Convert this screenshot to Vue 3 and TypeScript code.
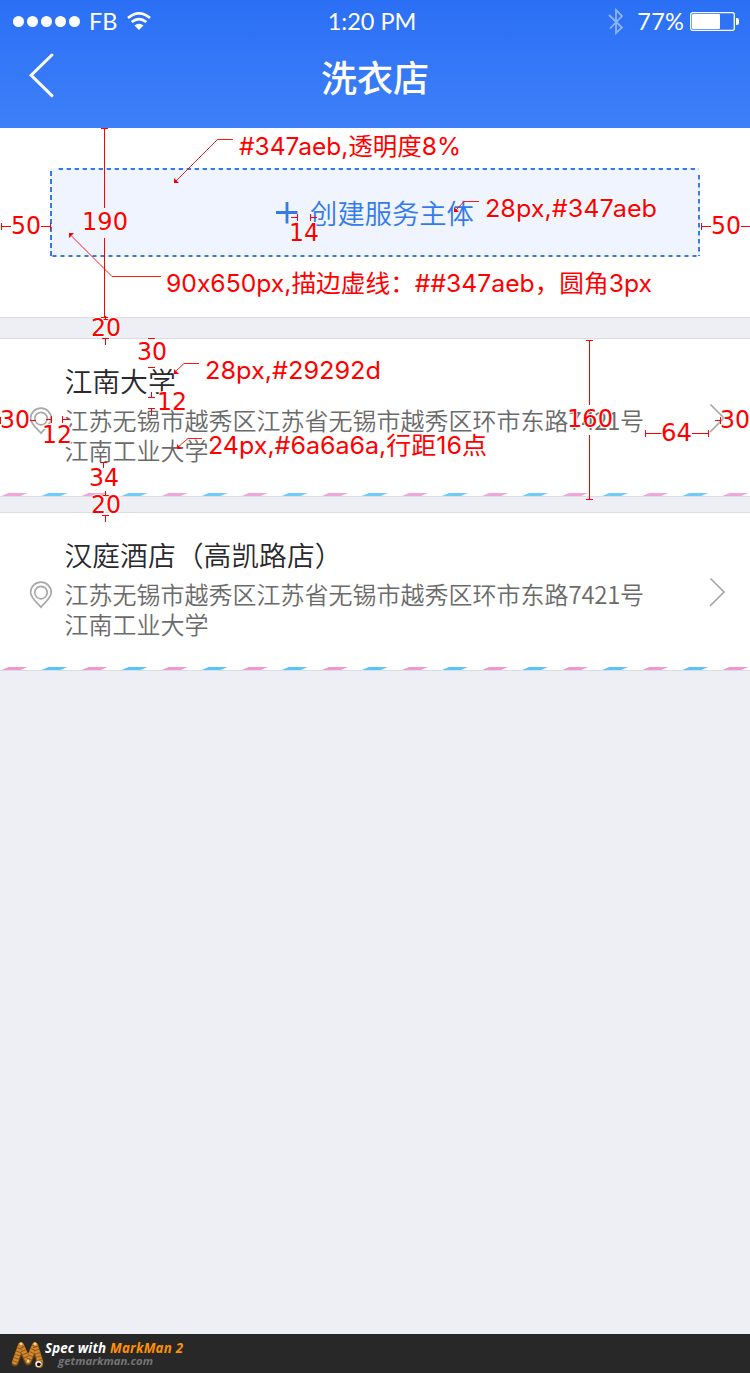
<script setup lang="ts">
interface Shop { name: string; open: string; number: string; close: string; area: string; soft: boolean }
interface Note { x: number; y: number; w: number; text: string }

const shops: Shop[] = [
  { name: '江南大学', open: '江苏无锡市越秀区江苏省无锡市越秀区环市东路', number: '7421', close: '号', area: '江南工业大学', soft: true },
  { name: '汉庭酒店（高凯路店）', open: '江苏无锡市越秀区江苏省无锡市越秀区环市东路', number: '7421', close: '号', area: '江南工业大学', soft: false },
]

const sizes: Note[] = [
  { x: 11, y: 234, w: 30, text: '50' },
  { x: 711, y: 234, w: 30, text: '50' },
  { x: 82, y: 230, w: 46, text: '190' },
  { x: 289, y: 241, w: 30, text: '14' },
  { x: 91, y: 336, w: 30, text: '20' },
  { x: 137, y: 360, w: 30, text: '30' },
  { x: 157, y: 410, w: 30, text: '12' },
  { x: 0, y: 428, w: 30, text: '30' },
  { x: 42, y: 443, w: 30, text: '12' },
  { x: 89, y: 486, w: 30, text: '34' },
  { x: 91, y: 513, w: 30, text: '20' },
  { x: 567, y: 427, w: 46, text: '160' },
  { x: 661, y: 441, w: 31, text: '64' },
  { x: 720, y: 428, w: 30, text: '30' },
]

const notes: Note[] = [
  { x: 239, y: 154.5, w: 222, text: '#347aeb,透明度8%' },
  { x: 485, y: 217, w: 172, text: '28px,#347aeb' },
  { x: 166, y: 291.5, w: 486, text: '90x650px,描边虚线：##347aeb，圆角3px' },
  { x: 205, y: 379, w: 176, text: '28px,#29292d' },
  { x: 208, y: 453.5, w: 279, text: '24px,#6a6a6a,行距16点' },
]

const rules = [
  'M101 128.5h7M104.5 128v80M104.5 238v80M101 317.5h7',
  'M1.5 223v7M2 226.5h9M41 226.5h9M50.5 223v7',
  'M701.5 223v7M702 226.5h9M741 226.5h9',
  'M291 217.5h6M297.5 214v7M310.5 214v7M311 217.5h6',
  'M102 319.5h7M105.5 316v4M102 338.5h7M105.5 339v6',
  'M148 338.5h7M148 367.5h7M148 397.5h7M151.5 392v5M148 408.5h7M151.5 409v6',
  'M30 420.5h6M46 419.5h5M51.5 416v7M62.5 416v7M63 419.5h6M0.5 417v7M715 420.5h5M720.5 417v7',
  'M100 462.5h7M103.5 463v5M102 495.5h7M105.5 491v5M102 515.5h7M105.5 516v6',
  'M586 340.5h7M589.5 341v64M589.5 435v65M586 499.5h7',
  'M645.5 430v7M646 433.5h16M692 433.5h16M708.5 430v7',
].join('')
</script>

<template>
  <main class="screen">
    <header class="header">
      <div class="status">
        <div class="carrier">
          <i v-for="n in 5" :key="n" class="dot"></i>
          <span class="network">FB</span>
          <svg class="wifi" width="24" height="19" viewBox="0 0 24 19">
            <path d="M1 6Q12-3.4 23 6M4.7 10.1Q12 4.1 19.3 10.1" fill="none" stroke="#fff" stroke-width="2.6" />
            <path d="M7.5 13.6Q12 9.8 16.5 13.6L12 18Z" fill="#fff" />
          </svg>
        </div>
        <span class="clock">1:20 PM</span>
        <div class="power">
          <svg width="16" height="28" viewBox="0 0 16 28"><path d="M1 7L14 19.5L8 25V2L14 8L2 20.5" fill="none" stroke="#8eb5fc" stroke-width="1.8" /></svg>
          <span class="percent">77%</span>
          <svg class="battery" width="50" height="20" viewBox="0 0 50 20">
            <rect x=".7" y=".7" width="43.6" height="17.6" rx="2" fill="none" stroke="#fff" stroke-width="1.3" />
            <rect x="2" y="2" width="28" height="15" rx="1" fill="#fff" /><path d="M46 6h1q2 0 2 2v3q0 2-2 2h-1z" fill="#fff" />
          </svg>
        </div>
      </div>
      <div class="nav">
        <svg class="back" width="26" height="46" viewBox="0 0 26 46"><path d="M22.9 2L2.2 22.3L22.9 42.6" fill="none" stroke="#fff" stroke-width="3" stroke-linecap="round" /></svg>
        <h1>洗衣店</h1>
      </div>
    </header>

    <section class="create">
      <button class="create-button">
        <svg class="dashes" width="650" height="89" viewBox="0 0 650 89" fill="none" stroke="#347aeb" stroke-width="2">
          <path d="M8.7 1H649" stroke-dasharray="4.3 3.7" /><path d="M2.5 88H649" stroke-dasharray="4 4" />
          <path d="M1 3V88" stroke-dasharray="5 3" /><path d="M649 7V88" stroke-dasharray="4.5 3.5" />
        </svg>
        <svg class="plus" width="22" height="22" viewBox="0 0 22 22"><path d="M0 10.5H21.5M11 0V21.5" stroke="#347aeb" stroke-width="2.8" /></svg>
        <span class="create-label">创建服务主体</span>
      </button>
    </section>

    <section class="shops">
      <article v-for="shop in shops" :key="shop.name" class="shop">
        <svg class="pin" width="24" height="28" viewBox="0 0 24 28" fill="none" stroke="#a8a8a8" stroke-width="1.7">
          <path d="M12 26.2C9 22.3 1.6 16.8 1.6 11.4a10.3 10.3 0 0 1 20.6 0C22.2 16.8 15 22.3 12 26.2Z" /><circle cx="12" cy="11.6" r="6.2" />
        </svg>
        <div class="info">
          <h2>{{ shop.name }}</h2>
          <p>{{ shop.open }}<span class="number">{{ shop.number }}</span>{{ shop.close }}<br />{{ shop.area }}</p>
        </div>
        <svg class="chevron" width="17" height="30" viewBox="0 0 17 30"><path d="M1.5 1.5L15 15L1 29" fill="none" stroke="#a8a8a8" stroke-width="1.7" /></svg>
        <svg class="stripe" :class="{ soft: shop.soft }" width="750" height="4" viewBox="0 0 750 4">
          <g v-for="n in 10" :key="n" :transform="`translate(${(n - 1) * 80.1} 0)`">
            <path d="M1.5 4L8.5 1H27.5L20.5 4Z" fill="#ed98d3" />
            <path d="M41.5 4L48.5 1H67.5L60.5 4Z" fill="#57c4fa" />
          </g>
        </svg>
      </article>
    </section>

    <footer class="footer">
      <svg width="36" height="30" viewBox="0 0 36 30">
        <path d="M4 23L10 6L17 22L24 6L29 22" fill="none" stroke="#704014" stroke-width="7" stroke-linecap="round" stroke-linejoin="round" />
        <path d="M4 22L10 5L17 21L24 5L29 21" fill="none" stroke="#d28a30" stroke-width="5.4" stroke-linecap="round" stroke-linejoin="round" />
        <path d="M4 22L10 5L17 21L24 5L29 21" fill="none" stroke="#945716" stroke-width="5.4" stroke-dasharray="1 2.4" />
        <circle cx="10" cy="4" r="1.4" fill="#ffd57b" /><circle cx="24" cy="4" r="1.4" fill="#ffd57b" /><circle cx="17" cy="21" r="1.4" fill="#ffd57b" />
        <circle cx="28" cy="24" r="4" fill="#b87525" /><circle cx="27.5" cy="24" r="3" fill="#fff" /><circle cx="27.8" cy="24.3" r="1.9" fill="#111" />
      </svg>
      <div class="brand">
        <svg width="150" height="34" viewBox="0 0 150 34">
          <text x="2" y="15" textLength="61" fill="#fff">Spec with</text><text x="67" y="15" textLength="73" fill="#ff9100">MarkMan 2</text>
          <text x="15" y="26.5" textLength="95" lengthAdjust="spacingAndGlyphs" fill="#747474" class="site">getmarkman.com</text>
        </svg>
      </div>
    </footer>

    <svg class="markup" width="750" height="1373" viewBox="0 0 750 1373">
      <path :d="rules" fill="none" stroke="#f00" />
      <g fill="none" stroke="#f00" stroke-width=".9">
        <path d="M233 139.5H217.5L176 181M161 276.5H112L71 235.5M479 201.5H464L456 210M199 363.5H184L175 372M202 438.5H188L178 447" />
      </g>
      <path d="M174 178v5h5zM69 238v-5h5zM454 207v5h5zM174 369v5h5zM177 444v5h5z" fill="#f00" />
      <text v-for="(s, i) in sizes" :key="'s' + i" class="size" :x="s.x" :y="s.y" :textLength="s.w" lengthAdjust="spacingAndGlyphs">{{ s.text }}</text>
      <text v-for="(note, i) in notes" :key="'n' + i" class="note" :x="note.x" :y="note.y" :textLength="note.w" lengthAdjust="spacingAndGlyphs">{{ note.text }}</text>
    </svg>
  </main>
</template>

<style>
body { margin: 0; }
</style>

<style scoped>
.screen { position: relative; display: flex; flex-direction: column; width: 750px; height: 1373px; overflow: hidden; background: #edeff4; font-family: "Noto Sans CJK SC", sans-serif; }
h1, h2, p { margin: 0; }
svg { display: block; flex: none; }
.header { height: 128px; background: linear-gradient(#2b6ff5, #3e80f9); color: #fff; }
.status { display: grid; grid-template-columns: 1fr auto 1fr; height: 43px; align-items: center; font: 23.5px/43px Lato, sans-serif; }
.carrier { display: flex; align-items: center; padding-left: 13px; gap: 3px; }
.dot { width: 11px; height: 11px; border-radius: 50%; background: #fff; }
.network { margin-left: 6px; }
.wifi { margin-left: 7px; }
.clock { padding-right: 6px; }
.power { display: flex; justify-content: flex-end; align-items: center; padding-right: 10px; }
.percent { margin: 0 6px 0 13px; letter-spacing: .2px; }
.nav { position: relative; height: 66px; display: flex; justify-content: center; align-items: center; }
.back { position: absolute; left: 29px; top: 10px; }
h1 { font-size: 36px; line-height: 66px; font-weight: 500; }
.create { box-sizing: border-box; height: 190px; padding: 40px 50px 0; background: #fff; border-bottom: 1px solid #dcdde1; }
.create-button { position: relative; display: flex; align-items: center; justify-content: center; width: 650px; height: 89px; padding: 0; border: 0; border-radius: 3px; background: #eff4fe; color: #347aeb; font: 350 27.3px/40px "Noto Sans CJK SC", sans-serif; }
.dashes { position: absolute; inset: 0; }
.plus { margin-right: 12px; }
.create-label { padding-bottom: 2px; }
.shops { padding-top: 20px; display: flex; flex-direction: column; gap: 15px; }
.shop { position: relative; box-sizing: border-box; height: 159px; display: flex; padding: 0 24px 0 29px; background: #fff; border: solid #dcdde1; border-width: 1px 0; }
.pin { margin-top: 68px; }
.info { flex: 1; padding: 21px 0 0 11.5px; }
h2 { font-size: 27.8px; line-height: 40px; font-weight: 350; color: #29292d; white-space: nowrap; }
p { padding-top: 5px; font-size: 24px; line-height: 29.5px; font-weight: 350; color: #6a6a6a; white-space: nowrap; }
.number { letter-spacing: -.3px; }
.chevron { margin-top: 64px; }
.stripe { position: absolute; left: 0; bottom: 0; }
.soft { opacity: .85; }
.footer { box-sizing: border-box; display: flex; gap: 0; height: 39px; margin-top: auto; padding: 6px 0 0 11px; background: #282828; }
.brand { margin: -2px 0 0 -4px; font: italic 700 13.3px "Open Sans", sans-serif; }
.site { font-size: 11px; }
.markup { position: absolute; inset: 0; pointer-events: none; }
.markup text { fill: #f00; stroke: #fff; stroke-width: 2px; paint-order: stroke; stroke-linejoin: round; }
.size { font: 24px "DejaVu Sans", sans-serif; }
.note { font: 24px Inter, "Noto Sans CJK SC", sans-serif; font-feature-settings: "calt" 0; }
</style>
